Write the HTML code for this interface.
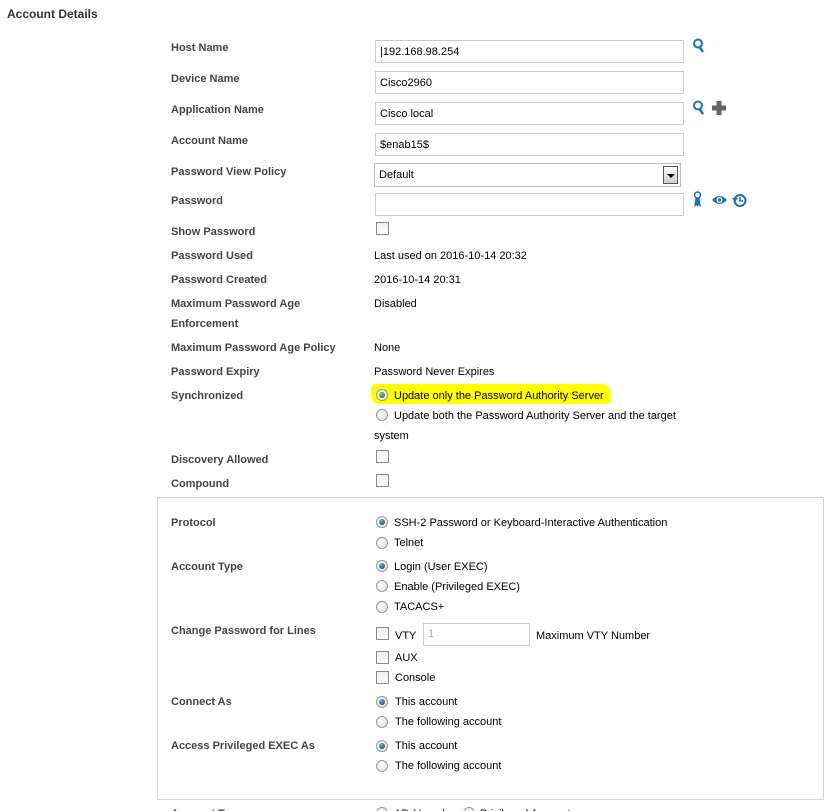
<!DOCTYPE html>
<html><head><meta charset="utf-8"><style>
html,body{margin:0;width:829px;height:811px;overflow:hidden}
body{background:#fff;position:relative;font-family:"Liberation Sans",Arial,sans-serif;font-size:11px;color:#000}
.a{position:absolute;white-space:nowrap;line-height:14px;transform:translateY(1px)}
.l{font-weight:bold;color:#444}
.in{position:absolute;border:1px solid #ccc;background:#fff;height:20px;box-sizing:border-box;font-size:11px;line-height:20px;padding-left:4px}
.cb{position:absolute;width:11px;height:11px;border:1px solid #888;background:linear-gradient(#eee,#fff);box-sizing:border-box}
.rb{position:absolute;width:12px;height:12px;border-radius:50%;border:1px solid #999;background:radial-gradient(circle at 40% 40%,#fff,#ddd);box-sizing:border-box}
.rb.on::after{content:"";position:absolute;left:2px;top:2px;width:6px;height:6px;border-radius:50%;background:radial-gradient(circle at 40% 35%,#6bd,#036)}
.rb.g::after{background:radial-gradient(circle at 40% 35%,#7d6,#250)}
</style></head><body>
<div class="a l" style="left:7px;top:6px;font-size:12px;color:#333">Account Details</div>

<div class="a l" style="left:171px;top:40px">Host Name</div>
<div class="in" style="left:375px;top:40px;width:309px;height:23px;line-height:23px">|192.168.98.254</div>
<div class="a l" style="left:171px;top:71px">Device Name</div>
<div class="in" style="left:375px;top:71px;width:309px;height:23px;line-height:23px">Cisco2960</div>
<div class="a l" style="left:171px;top:102px">Application Name</div>
<div class="in" style="left:375px;top:102px;width:309px;height:23px;line-height:23px">Cisco local</div>
<div class="a l" style="left:171px;top:133px">Account Name</div>
<div class="in" style="left:375px;top:133px;width:309px;height:23px;line-height:23px">$enab15$</div>
<div class="a l" style="left:171px;top:164px">Password View Policy</div>
<div class="in" style="left:374px;top:163px;width:307px;height:24px;line-height:23px;border-color:#bbb">Default
<div style="position:absolute;right:2px;top:2px;width:15px;height:18px;border:1px solid #555;box-sizing:border-box;background:linear-gradient(#fff,#ccc)"><div style="position:absolute;left:3px;top:7px;border-left:4px solid transparent;border-right:4px solid transparent;border-top:4px solid #000"></div></div></div>
<div class="a l" style="left:171px;top:193px">Password</div>
<div class="in" style="left:375px;top:193px;width:309px;height:23px"></div>

<svg style="position:absolute;left:692px;top:38px" width="14" height="16"><circle cx="6" cy="5.5" r="4" fill="none" stroke="#1a73b8" stroke-width="2"/><path d="M7.5 9 L11 14" stroke="#1a73b8" stroke-width="2.5"/></svg>
<svg style="position:absolute;left:692px;top:100px" width="14" height="16"><circle cx="6" cy="5.5" r="4" fill="none" stroke="#1a73b8" stroke-width="2"/><path d="M7.5 9 L11 14" stroke="#1a73b8" stroke-width="2.5"/></svg>
<svg style="position:absolute;left:711px;top:100px" width="16" height="16"><path d="M5.5 1h5v4.5h4.5v5h-4.5v4.5h-5v-4.5h-4.5v-5h4.5z" fill="#666"/></svg>
<svg style="position:absolute;left:693px;top:191px" width="10" height="18"><circle cx="4.5" cy="4" r="3" fill="none" stroke="#1a73b8" stroke-width="1.5"/><path d="M2.5 7 L1 16 L3.5 14 L4.5 16 L5.5 14 L8 16 L6.5 7" fill="#1a73b8"/></svg>
<svg style="position:absolute;left:711px;top:194px" width="17" height="12"><path d="M1 6 Q8.5 -2 16 6 Q8.5 14 1 6z" fill="#1a73b8"/><circle cx="8.5" cy="6" r="3" fill="#fff"/><circle cx="8.5" cy="6" r="1.6" fill="#1a73b8"/></svg>
<svg style="position:absolute;left:732px;top:192px" width="16" height="16"><circle cx="8" cy="8.5" r="5.5" fill="none" stroke="#1a73b8" stroke-width="2"/><path d="M8 5v4h3" fill="none" stroke="#1a73b8" stroke-width="1.5"/><path d="M0 6l3 4 3-4z" fill="#1a73b8"/></svg>

<div class="a l" style="left:171px;top:224px">Show Password</div>
<div class="cb" style="left:376px;top:222px;width:13px;height:13px"></div>
<div class="a l" style="left:171px;top:248px">Password Used</div>
<div class="a" style="left:374px;top:248px">Last used on 2016-10-14 20:32</div>
<div class="a l" style="left:171px;top:272px">Password Created</div>
<div class="a" style="left:374px;top:272px">2016-10-14 20:31</div>
<div class="a l" style="left:171px;top:296px">Maximum Password Age</div>
<div class="a l" style="left:171px;top:316px">Enforcement</div>
<div class="a" style="left:374px;top:296px">Disabled</div>
<div class="a l" style="left:171px;top:340px">Maximum Password Age Policy</div>
<div class="a" style="left:374px;top:340px">None</div>
<div class="a l" style="left:171px;top:364px">Password Expiry</div>
<div class="a" style="left:374px;top:364px">Password Never Expires</div>
<div class="a l" style="left:171px;top:388px">Synchronized</div>
<div style="position:absolute;left:371px;top:384px;width:240px;height:20px;background:#ff0;border-radius:5px 10px 4px 8px"></div>
<div class="rb on g" style="left:376px;top:389px"></div>
<div class="a" style="left:394px;top:388px">Update only the Password Authority Server</div>
<div class="rb" style="left:376px;top:409px"></div>
<div class="a" style="left:394px;top:408px">Update both the Password Authority Server and the target</div>
<div class="a" style="left:374px;top:428px">system</div>
<div class="a l" style="left:171px;top:452px">Discovery Allowed</div>
<div class="cb" style="left:376px;top:450px;width:13px;height:13px"></div>
<div class="a l" style="left:171px;top:476px">Compound</div>
<div class="cb" style="left:376px;top:474px;width:13px;height:13px"></div>

<div style="position:absolute;left:157px;top:497px;width:667px;height:303px;border:1px solid #d4d4d4;box-sizing:border-box"></div>
<div class="a l" style="left:171px;top:515px">Protocol</div>
<div class="rb on" style="left:376px;top:516px"></div>
<div class="a" style="left:394px;top:515px">SSH-2 Password or Keyboard-Interactive Authentication</div>
<div class="rb" style="left:376px;top:537px"></div>
<div class="a" style="left:394px;top:535px">Telnet</div>
<div class="a l" style="left:171px;top:559px">Account Type</div>
<div class="rb on" style="left:376px;top:560px"></div>
<div class="a" style="left:394px;top:559px">Login (User EXEC)</div>
<div class="rb" style="left:376px;top:580px"></div>
<div class="a" style="left:394px;top:579px">Enable (Privileged EXEC)</div>
<div class="rb" style="left:376px;top:601px"></div>
<div class="a" style="left:394px;top:599px">TACACS+</div>
<div class="a l" style="left:171px;top:623px">Change Password for Lines</div>
<div class="cb" style="left:376px;top:627px;width:13px;height:13px"></div>
<div class="a" style="left:395px;top:628px">VTY</div>
<div class="in" style="left:423px;top:623px;width:107px;height:23px;line-height:21px;color:#aaa">1</div>
<div class="a" style="left:536px;top:628px">Maximum VTY Number</div>
<div class="cb" style="left:376px;top:651px;width:13px;height:13px"></div>
<div class="a" style="left:395px;top:650px">AUX</div>
<div class="cb" style="left:376px;top:671px;width:13px;height:13px"></div>
<div class="a" style="left:395px;top:670px">Console</div>
<div class="a l" style="left:171px;top:694px">Connect As</div>
<div class="rb on" style="left:376px;top:696px"></div>
<div class="a" style="left:395px;top:694px">This account</div>
<div class="rb" style="left:376px;top:716px"></div>
<div class="a" style="left:395px;top:714px">The following account</div>
<div class="a l" style="left:171px;top:738px">Access Privileged EXEC As</div>
<div class="rb on" style="left:376px;top:740px"></div>
<div class="a" style="left:395px;top:738px">This account</div>
<div class="rb" style="left:376px;top:760px"></div>
<div class="a" style="left:395px;top:758px">The following account</div>

<div class="a l" style="left:171px;top:806px">Account Type</div>
<div class="rb" style="left:376px;top:807px"></div>
<div class="a" style="left:394px;top:806px">AD / Local</div>
<div class="rb" style="left:463px;top:807px"></div>
<div class="a" style="left:480px;top:806px">Privileged Account</div>
</body></html>
